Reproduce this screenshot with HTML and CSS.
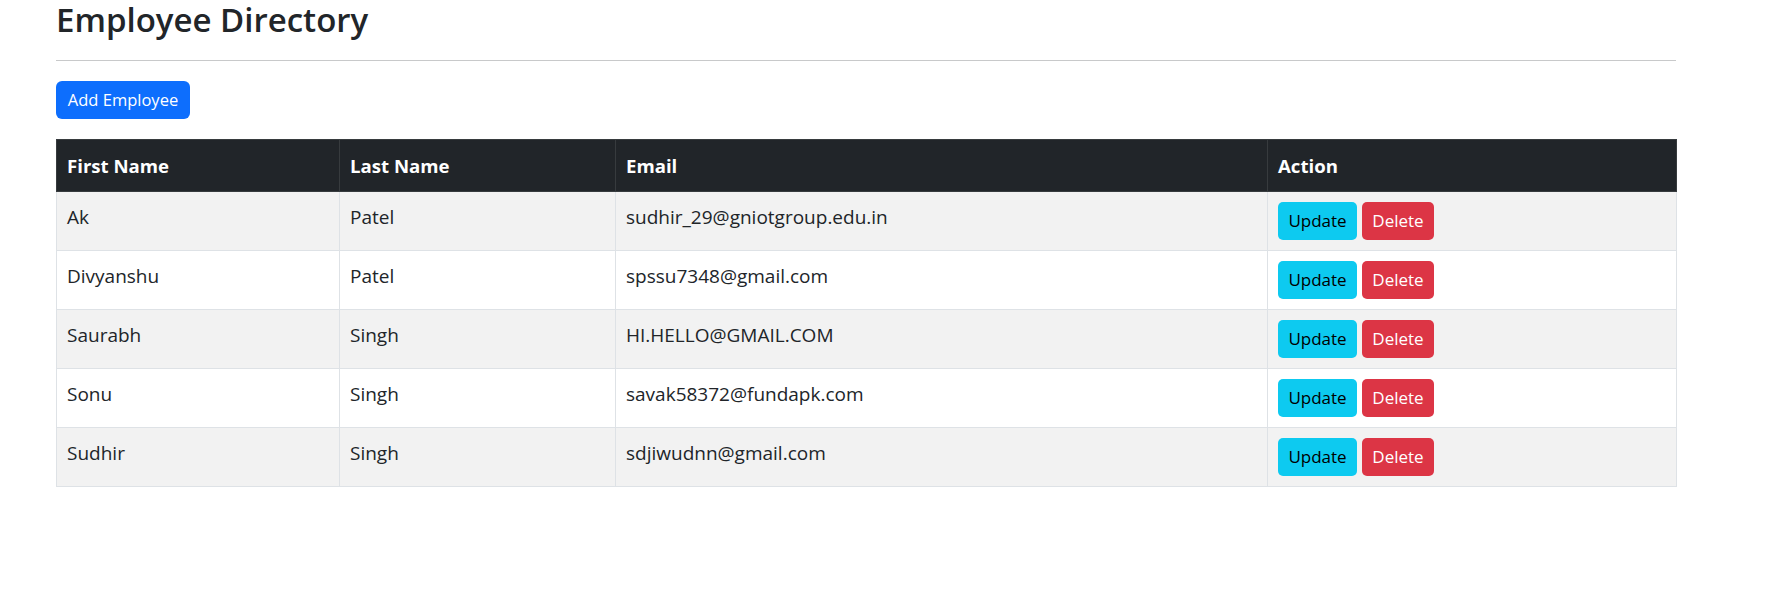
FILE: index.html
```html
<!DOCTYPE html>
<html lang="en">
<head>
<meta charset="utf-8">
<title>Employee Directory</title>
<link rel="stylesheet" href="styles.css">
</head>
<body>
<div class="page">
  <h2 class="title">Employee Directory</h2>
  <hr class="rule">
  <div class="toolbar">
    <button class="btn btn-primary">Add Employee</button>
  </div>
  <table class="emp-table">
    <colgroup>
      <col class="c1"><col class="c2"><col class="c3"><col class="c4">
    </colgroup>
    <thead>
      <tr><th>First Name</th><th>Last Name</th><th>Email</th><th>Action</th></tr>
    </thead>
    <tbody>
      <tr><td>Ak</td><td>Patel</td><td>sudhir_29@gniotgroup.edu.in</td><td class="actions"><div class="btns"><button class="btn btn-info">Update</button><button class="btn btn-danger">Delete</button></div></td></tr>
      <tr><td>Divyanshu</td><td>Patel</td><td>spssu7348@gmail.com</td><td class="actions"><div class="btns"><button class="btn btn-info">Update</button><button class="btn btn-danger">Delete</button></div></td></tr>
      <tr><td>Saurabh</td><td>Singh</td><td>HI.HELLO@GMAIL.COM</td><td class="actions"><div class="btns"><button class="btn btn-info">Update</button><button class="btn btn-danger">Delete</button></div></td></tr>
      <tr><td>Sonu</td><td>Singh</td><td>savak58372@fundapk.com</td><td class="actions"><div class="btns"><button class="btn btn-info">Update</button><button class="btn btn-danger">Delete</button></div></td></tr>
      <tr><td>Sudhir</td><td>Singh</td><td>sdjiwudnn@gmail.com</td><td class="actions"><div class="btns"><button class="btn btn-info">Update</button><button class="btn btn-danger">Delete</button></div></td></tr>
    </tbody>
  </table>
</div>
</body>
</html>
```

FILE: styles.css
```css
html, body {
  margin: 0;
  padding: 0;
  background: #fff;
}
body {
  font-family: "Open Sans", "Noto Sans", sans-serif;
  color: #212529;
}
.page {
  margin-left: 56px;
  width: 1620px;
}
.title {
  margin: 0;
  font-size: 33px;
  font-weight: 600;
  line-height: 40px;
  color: #212529;
}
.rule {
  border: 0;
  border-top: 1px solid #c8c9ca;
  margin: 20px 0;
  height: 0;
}
.toolbar {
  display: flex;
  height: 38px;
}
.btn {
  display: inline-block;
  border: 0;
  font-family: inherit;
  white-space: nowrap;
  cursor: pointer;
  box-sizing: border-box;
}
.btn-primary {
  background: #0d6efd;
  color: #fff;
  font-size: 16.5px;
  height: 38px;
  line-height: 38px;
  padding: 0 10px;
  border-radius: 6px;
  width: 134px;
}
.emp-table {
  margin-top: 20px;
  width: 1620px;
  border-collapse: collapse;
  table-layout: fixed;
}
.c1 { width: 283px; }
.c2 { width: 276px; }
.c3 { width: 652px; }
.c4 { width: 409px; }
.emp-table th {
  background: #212529;
  color: #fff;
  text-align: left;
  font-weight: 700;
  font-size: 18.6px;
  line-height: 27px;
  padding: 12px 10px 11.5px;
  border: 1px solid #373b3e;
}
.emp-table td {
  font-size: 19px;
  line-height: 27px;
  padding: 12.5px 10px 8px;
  vertical-align: top;
  border: 1px solid #dee2e6;
}
.emp-table tbody tr:nth-child(odd) td {
  background: #f2f2f2;
}
.emp-table td.actions {
  padding: 10px 10px;
}
.btns {
  display: flex;
  gap: 5px;
}
.btn-info, .btn-danger {
  height: 38px;
  line-height: 38px;
  font-size: 17px;
  padding: 0 10px;
  border-radius: 5px;
}
.btn-info {
  background: #0dcaf0;
  color: #000;
  width: 79px;
}
.btn-danger {
  background: #dc3545;
  color: #fff;
  width: 72px;
}
```
